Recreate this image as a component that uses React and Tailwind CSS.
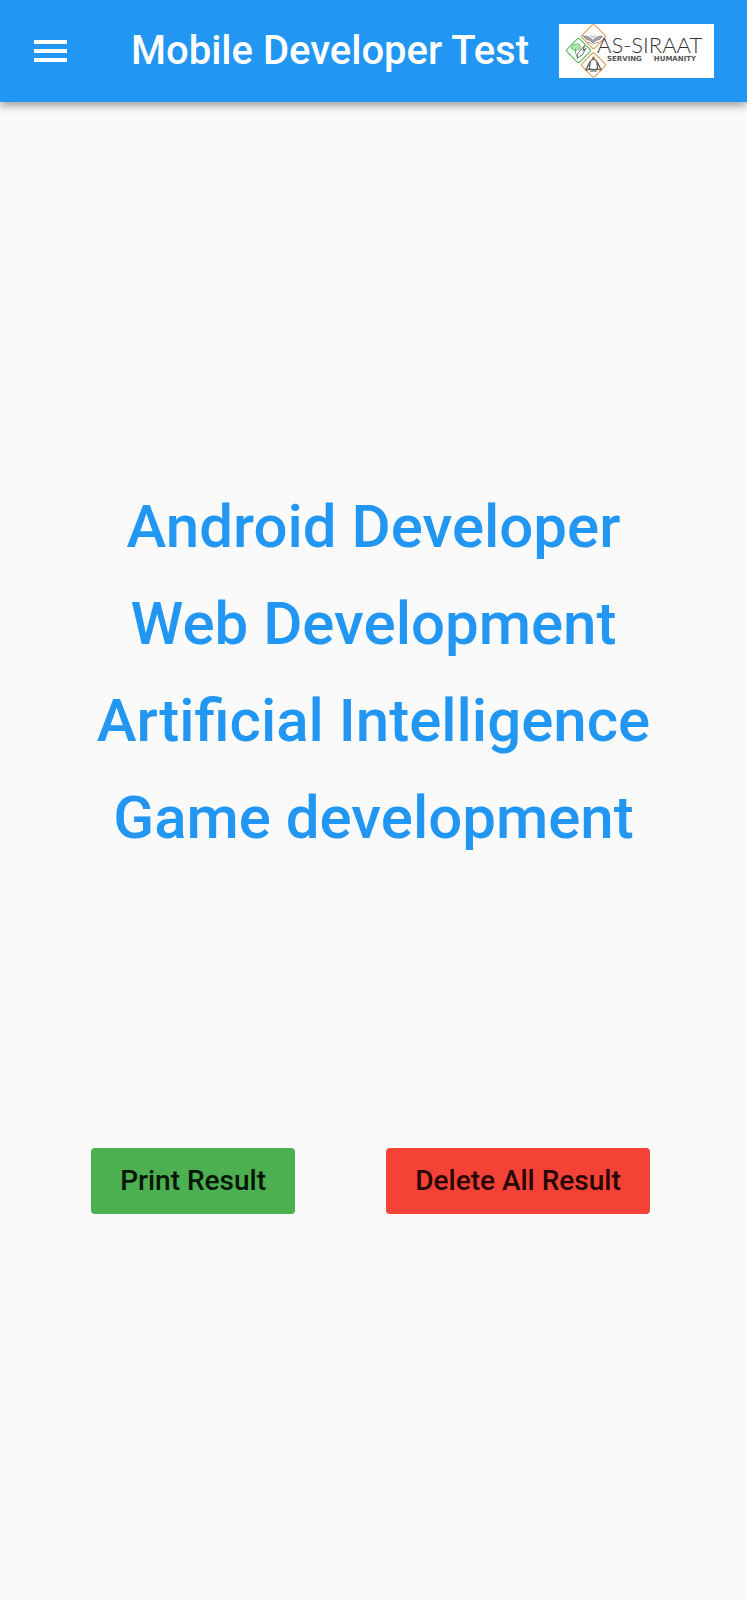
const topics = [
  'Android Developer',
  'Web Development',
  'Artificial Intelligence',
  'Game development',
];

function MenuIcon() {
  return (
    <svg viewBox="0 0 33 22" className="h-[22px] w-[33px]" fill="currentColor" aria-hidden="true">
      <rect y="0" width="33" height="4" />
      <rect y="9" width="33" height="4" />
      <rect y="18" width="33" height="4" />
    </svg>
  );
}

function LogoMark() {
  return (
    <svg viewBox="0 0 52 54" className="h-[54px] w-[52px] shrink-0" fill="none" strokeLinejoin="round" strokeLinecap="round" aria-hidden="true">
      <g strokeWidth="1.2">
        <rect x="25.500" y="3.500" width="18" height="18" rx="2" transform="rotate(45 34.500 12.500)" stroke="#e0a15c" />
        <rect x="25.500" y="32" width="18" height="18" rx="2" transform="rotate(45 34.500 41)" stroke="#e0a15c" />
        <rect x="10.500" y="17.500" width="18" height="18" rx="2" transform="rotate(45 19.500 26.500)" stroke="#5cbc5c" />
      </g>
      <g fill="#555" stroke="#444" strokeWidth="0.5">
        <path d="M24.500 12c4 0 7.500 1.500 9.500 4.500 2-3 5.500-4.500 9.500-4.500-1 2-2 3-3.500 3.500-2.500.5-4.500 1.500-6 3.500-1.500-2-3.500-3-6-3.500-1.500-.5-2.500-1.500-3.500-3.500z" fillOpacity="0.5" />
        <path d="M29 18.500c2 0 4 .5 5 2 1-1.500 3-2 5-2" fill="none" />
        <path d="M31.500 11.500l2.500 2 2.500-2" fill="none" />
      </g>
      <g stroke="#5cbc5c" strokeWidth="0.9">
        <path d="M12.500 24c0-3 2-4.500 4-3.500 2-2 4.500-.5 4.500 1.500 1.500 2-.5 4-2.500 3.500-1.500 1.500-5 1-6-1.500z" fill="#b4e2b4" />
        <path d="M16.500 25v4l2 4" />
      </g>
      <g stroke="#555" strokeWidth="0.9">
        <path d="M18.500 34c-1-3 0-5 2.500-7l4.500-5.500-1.500 5 3-2-3.500 6-5 3.500" />
      </g>
      <g stroke="#555" strokeWidth="1.200">
        <path d="M30.500 44.500c-.5-2 .5-3 .5-5 0-2.500 1.500-4 3.500-4s3.500 1.500 3.500 4c0 2 1 3 .5 5-2 1.500-6 1.500-8 0z" />
        <path d="M30.500 38.500l-3.500 7h4M38.500 38.500l3.500 7h-4M31.500 47h6" />
      </g>
      <g fill="#a8743c">
        <circle cx="34.500" cy="34" r="1.500" />
        <circle cx="27.500" cy="45.500" r="1.500" />
        <circle cx="41.500" cy="45.500" r="1.500" />
      </g>
    </svg>
  );
}

function Logo() {
  return (
    <div className="flex h-[54px] w-[155px] shrink-0 items-center bg-white">
      <LogoMark />
      <div className="-ml-3.5 flex flex-col pb-1 text-[#333]">
        <span className="whitespace-nowrap font-['Lato'] text-[22px] leading-5 font-light">AS-SIRAAT</span>
        <span className="flex gap-3 pl-2.5 font-['DejaVu_Sans'] text-[7px] leading-2 font-bold text-[#555]">
          <span>SERVING</span>
          <span>HUMANITY</span>
        </span>
      </div>
    </div>
  );
}

export default function App() {
  return (
    <div className="flex min-h-screen flex-col bg-[#fafafa] font-['Roboto',sans-serif]">
      <header className="flex h-[102px] shrink-0 items-center bg-[#2196f3] pr-[33px] pl-[34px] text-white shadow-[0_4px_8px_rgba(0,0,0,0.35)]">
        <button type="button" aria-label="Open menu" className="shrink-0">
          <MenuIcon />
        </button>
        <h1 className="ml-16 flex-1 whitespace-nowrap text-[40px] leading-12 font-medium">Mobile Developer Test</h1>
        <Logo />
      </header>
      <main className="flex flex-col">
        <ul className="mt-[376px] flex flex-col items-center text-[60px] leading-[97px] font-medium text-[#2196f3]">
          {topics.map((topic) => (
            <li key={topic}>{topic}</li>
          ))}
        </ul>
        <div className="mt-[282px] flex justify-evenly pr-1.5 text-[28px] leading-8 font-medium">
          <button type="button" className="h-[66px] rounded-[4px] bg-[#4caf50] px-[29px] text-[#061606]">
            Print Result
          </button>
          <button type="button" className="h-[66px] rounded-[4px] bg-[#f44336] px-[29px] text-[#260503]">
            Delete All Result
          </button>
        </div>
      </main>
    </div>
  );
}
